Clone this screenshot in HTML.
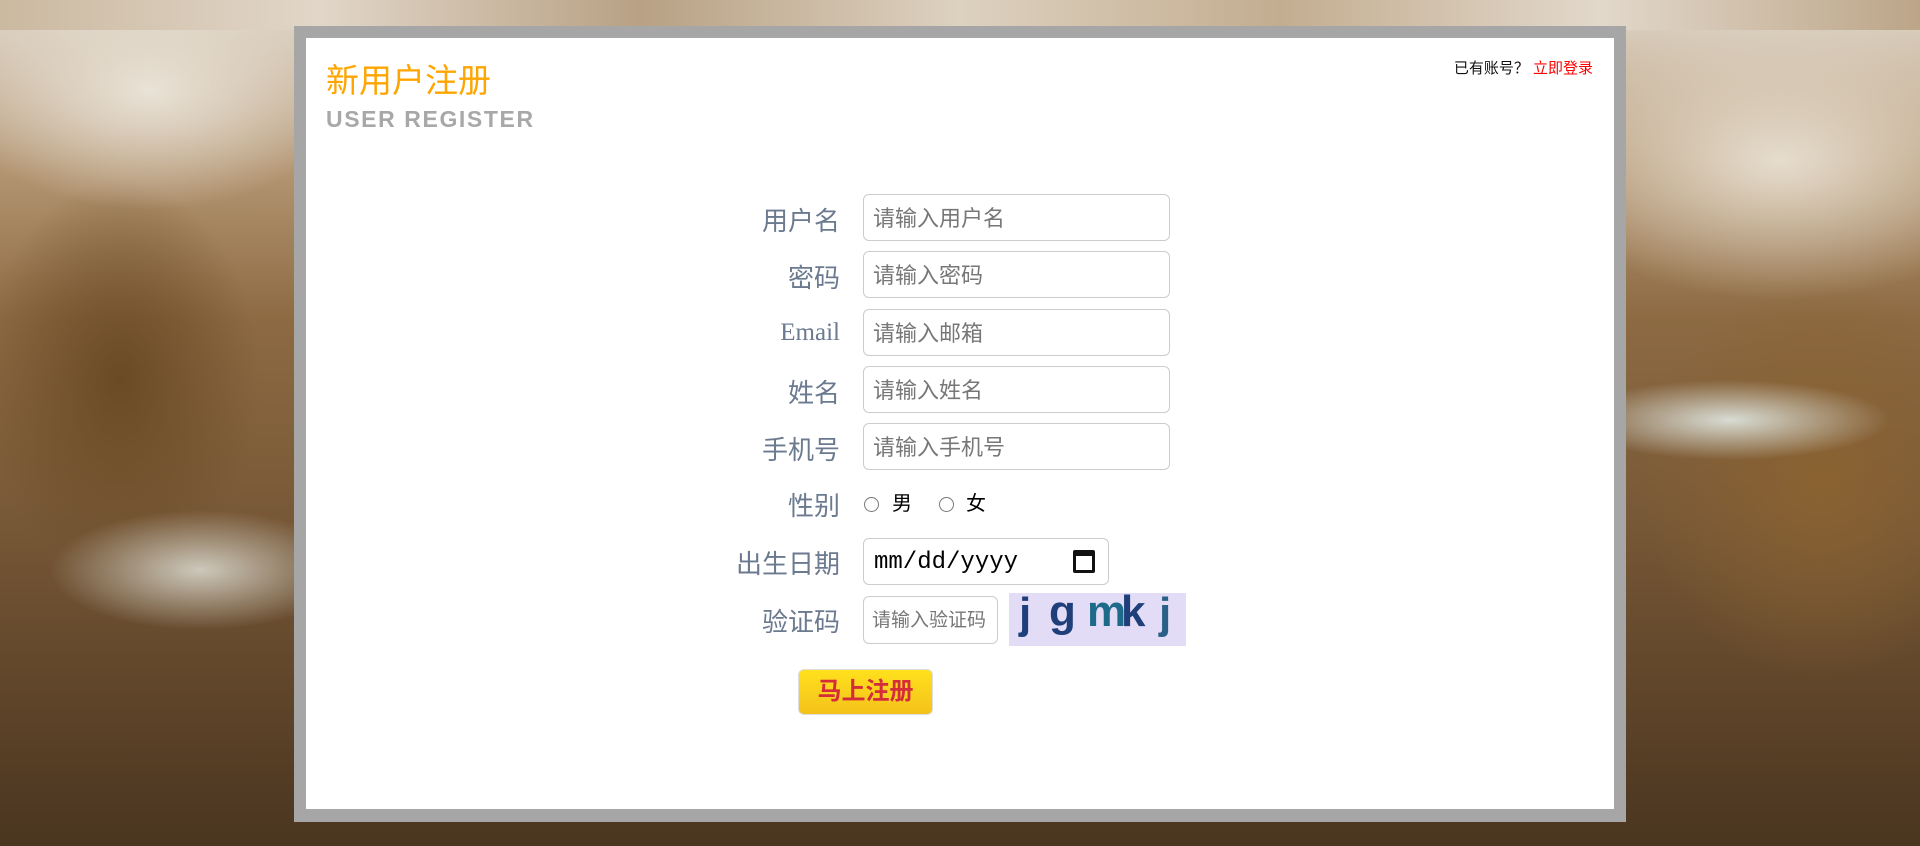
<!DOCTYPE html>
<html><head><meta charset="utf-8">
<style>
*{margin:0;padding:0;box-sizing:border-box}
body{width:1920px;height:846px;overflow:hidden;position:relative;font-family:"Liberation Sans","Noto Sans CJK SC",sans-serif;
background:
radial-gradient(ellipse 200px 120px at 150px 90px,#e9e2d6 0%,rgba(233,226,214,0) 100%),
radial-gradient(ellipse 250px 140px at 1780px 160px,#e6ddce 0%,rgba(230,221,206,0) 100%),
radial-gradient(ellipse 160px 40px at 1730px 420px,#d8dcd4 0%,rgba(216,220,212,0) 100%),
radial-gradient(ellipse 150px 60px at 200px 570px,#cdc8bb 0%,rgba(205,200,187,0) 100%),
radial-gradient(ellipse 140px 200px at 120px 380px,#6a4a25 0%,rgba(106,74,37,0) 100%),
radial-gradient(ellipse 180px 200px at 1820px 480px,#8a6232 0%,rgba(138,98,50,0) 100%),
linear-gradient(180deg,#c9b8a0 0px,#d8ccbb 30px,#b39572 170px,#8d6a42 320px,#7a5a38 500px,#5e4429 700px,#4a3520 846px);}
.top{position:absolute;left:0;top:0;width:1920px;height:30px;background:linear-gradient(90deg,#cbb9a0,#e1d6c8,#b8a184,#ddd1c0,#c3ad90,#e2d8cb,#bca588)}
.box{position:absolute;left:294px;top:26px;width:1332px;height:796px;background:#a6a6a6}
.inner{position:absolute;left:306px;top:38px;width:1308px;height:771px;background:#fff}
.t1{position:absolute;left:326px;top:61px;font-size:33px;color:#ffa500;line-height:40px}
.t2{position:absolute;left:326px;top:106px;font-size:23px;font-weight:bold;color:#a8a8a8;line-height:26px;letter-spacing:1.6px}
.login{position:absolute;right:327px;top:59px;font-size:15px;color:#111;line-height:20px}
.login span{color:#f00}
.lbl{position:absolute;width:200px;left:640px;text-align:right;font-size:26px;color:#6b7a8f;line-height:46px}
.inp{position:absolute;left:863px;width:307px;height:47px;border:1px solid #ccc;border-radius:6px;font-size:22px;color:#777;padding-left:9px;line-height:47px}
.radio{position:absolute;top:497px;width:15px;height:15px;border:1.5px solid #767676;border-radius:50%}
.rt{position:absolute;top:491px;font-size:20px;color:#000;line-height:26px}
.date{position:absolute;left:863px;top:538px;width:246px;height:47px;border:1px solid #ccc;border-radius:6px;font-family:"Liberation Mono",monospace;font-size:24px;color:#000;padding-left:10px;line-height:47px}
.cal{position:absolute;left:1073px;top:550px;width:22px;height:23px;border:3px solid #111;border-top-width:6px;border-radius:2px}
.cap{position:absolute;left:863px;top:596px;width:135px;height:48px;border:1px solid #ccc;border-radius:6px;font-size:19px;color:#777;padding-left:8px;line-height:48px;overflow:hidden;white-space:nowrap}
.img{position:absolute;left:1009px;top:593px;width:177px;height:53px;background:#e2dcf6;overflow:hidden}
.img b{position:absolute;font-family:"Liberation Sans",sans-serif;font-weight:bold;font-size:44px;line-height:50px;color:#1f3f7a}
.btn{position:absolute;left:798px;top:669px;width:135px;height:46px;border:1px solid #ddd;border-radius:6px;background:linear-gradient(#ffe01d,#f4c21b);color:#d42c3a;font-size:24px;font-weight:bold;text-align:center;line-height:44px}
</style></head><body>
<div class="top"></div>
<div class="box"></div>
<div class="inner"></div>
<div class="t1">新用户注册</div>
<div class="t2">USER REGISTER</div>
<div class="login">已有账号？ <span>立即登录</span></div>

<div class="lbl" style="top:198px">用户名</div>
<div class="inp" style="top:194px">请输入用户名</div>
<div class="lbl" style="top:255px">密码</div>
<div class="inp" style="top:251px">请输入密码</div>
<div class="lbl" style="top:310px;font-family:'Liberation Serif',serif;font-size:25px">Email</div>
<div class="inp" style="top:309px">请输入邮箱</div>
<div class="lbl" style="top:370px">姓名</div>
<div class="inp" style="top:366px">请输入姓名</div>
<div class="lbl" style="top:427px">手机号</div>
<div class="inp" style="top:423px">请输入手机号</div>

<div class="lbl" style="top:483px">性别</div>
<div class="radio" style="left:864px"></div><div class="rt" style="left:892px">男</div>
<div class="radio" style="left:939px"></div><div class="rt" style="left:966px">女</div>

<div class="lbl" style="top:541px">出生日期</div>
<div class="date">mm/dd/yyyy</div>
<div class="cal"></div>

<div class="lbl" style="top:599px">验证码</div>
<div class="cap">请输入验证码</div>
<div class="img"><b style="left:10px;top:-4px">j</b><b style="left:40px;top:-6px">g</b><b style="left:78px;top:-6px;color:#1d6a8a">m</b><b style="left:112px;top:-6px">k</b><b style="left:150px;top:-4px;color:#2a5f88">j</b></div>

<div class="btn">马上注册</div>
</body></html>
